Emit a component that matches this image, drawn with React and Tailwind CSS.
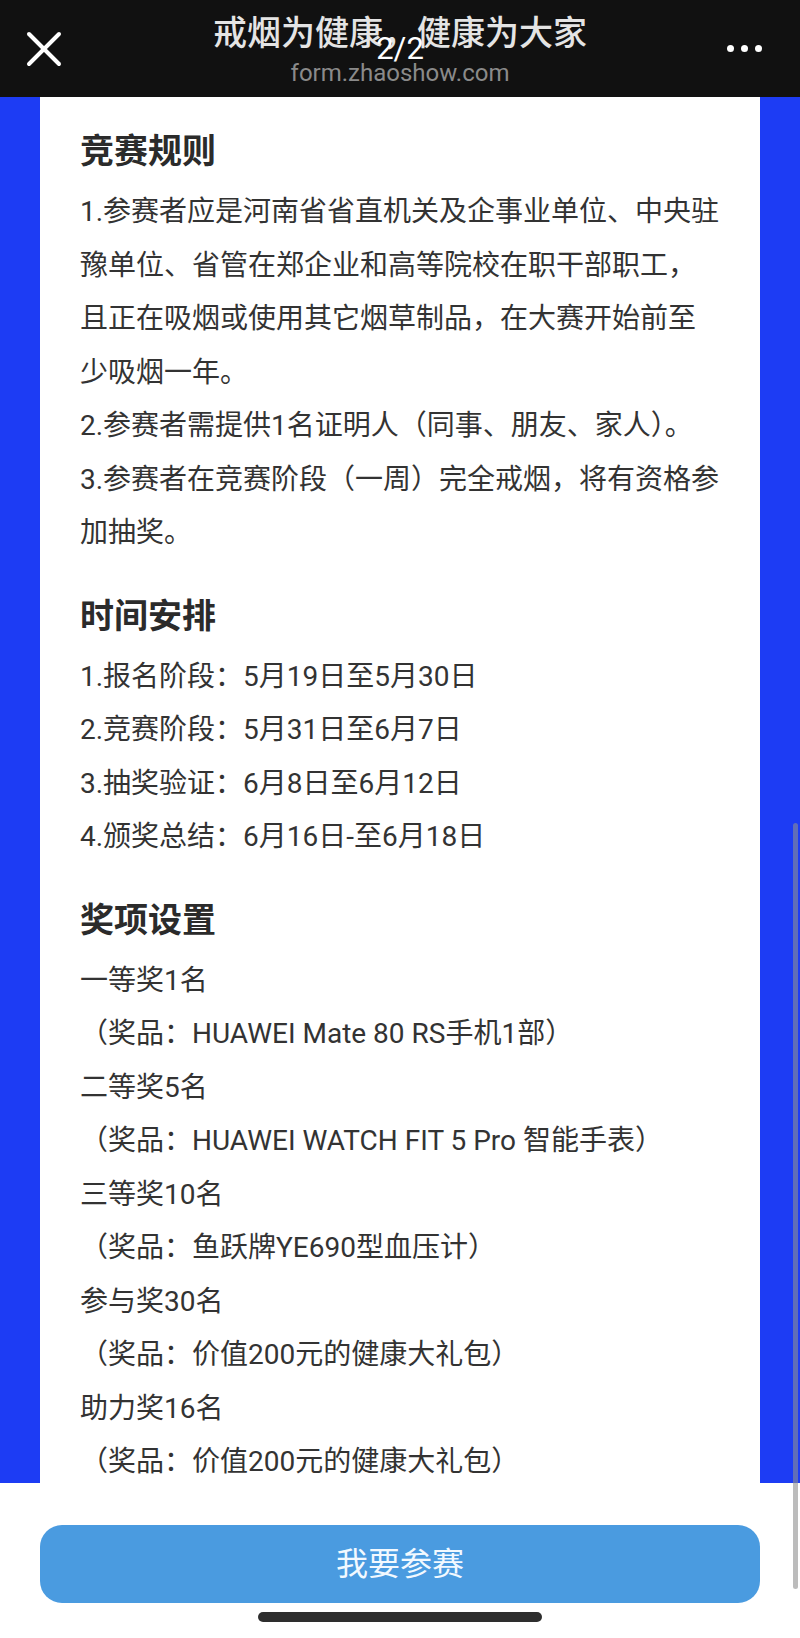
import React from "react";

const rules = [
  "1.参赛者应是河南省省直机关及企事业单位、中央驻",
  "豫单位、省管在郑企业和高等院校在职干部职工，",
  "且正在吸烟或使用其它烟草制品，在大赛开始前至",
  "少吸烟一年。",
  "2.参赛者需提供1名证明人（同事、朋友、家人）。",
  "3.参赛者在竞赛阶段（一周）完全戒烟，将有资格参",
  "加抽奖。",
];

const schedule = [
  "1.报名阶段：5月19日至5月30日",
  "2.竞赛阶段：5月31日至6月7日",
  "3.抽奖验证：6月8日至6月12日",
  "4.颁奖总结：6月16日-至6月18日",
];

const prizes = [
  "一等奖1名",
  "（奖品：HUAWEI Mate 80 RS手机1部）",
  "二等奖5名",
  "（奖品：HUAWEI WATCH FIT 5 Pro 智能手表）",
  "三等奖10名",
  "（奖品：鱼跃牌YE690型血压计）",
  "参与奖30名",
  "（奖品：价值200元的健康大礼包）",
  "助力奖16名",
  "（奖品：价值200元的健康大礼包）",
];

function Section({ title, lines, first }) {
  return (
    <section className={first ? "" : "mt-[26px]"}>
      <h2 className="text-[34px] leading-[60px] font-bold text-[#2b2b2b] mb-[4px]">
        {title}
      </h2>
      {lines.map((l, i) => (
        <div key={i} className="text-[28px] leading-[53.5px] text-[#333333] whitespace-nowrap">
          {l}
        </div>
      ))}
    </section>
  );
}

export default function App() {
  return (
    <div className="relative w-[800px] h-[1638px] overflow-hidden bg-white flex flex-col font-[Roboto,'Noto_Sans_CJK_SC','Noto_Sans',sans-serif]">
      {/* Header */}
      <header className="relative h-[97px] shrink-0 bg-[#111111] grid grid-cols-[88px_1fr_88px] items-center">
        <div className="flex items-center justify-center">
          <svg width="36" height="36" viewBox="0 0 36 36">
            <line x1="3" y1="3" x2="33" y2="33" stroke="#ffffff" strokeWidth="4" strokeLinecap="round" />
            <line x1="33" y1="3" x2="3" y2="33" stroke="#ffffff" strokeWidth="4" strokeLinecap="round" />
          </svg>
        </div>
        <div className="self-start pt-[12px] flex flex-col items-center">
          <div className="text-[34px] leading-[42px] font-medium text-[#e4e4e4] whitespace-nowrap">
            戒烟为健康，健康为大家
          </div>
          <div className="mt-[5px] text-[24px] leading-[28px] text-[#8a8a8a] whitespace-nowrap">
            form.zhaoshow.com
          </div>
        </div>
        <div className="flex items-center justify-end pr-[38px] gap-[7px]">
          <span className="w-[7px] h-[7px] rounded-full bg-white" />
          <span className="w-[7px] h-[7px] rounded-full bg-white" />
          <span className="w-[7px] h-[7px] rounded-full bg-white" />
        </div>
        <div className="absolute left-1/2 -translate-x-1/2 top-[33px] text-[31px] leading-[31px] text-white">
          2/2
        </div>
      </header>

      {/* Main */}
      <main className="h-[1386px] shrink-0 overflow-hidden bg-[#1d3cf4] px-[40px]">
        <div className="h-full bg-white pl-[40px] pt-[24px]">
          <Section title="竞赛规则" lines={rules} first />
          <Section title="时间安排" lines={schedule} />
          <Section title="奖项设置" lines={prizes} />
        </div>
      </main>

      {/* Footer */}
      <footer className="flex-1 bg-white px-[40px] pt-[42px] flex flex-col items-center">
        <button className="w-full h-[78px] rounded-[22px] bg-[#4a9be0] text-[32px] text-[#f2f9ff] flex items-center justify-center">
          我要参赛
        </button>
        <div className="mt-[9px] w-[284px] h-[10px] rounded-full bg-[#2e2e2e]" />
      </footer>

      {/* Scrollbar */}
      <div className="absolute right-[2px] top-[823px] w-[5px] h-[766px] rounded-full bg-[#8f8f8f]/60" />
    </div>
  );
}
